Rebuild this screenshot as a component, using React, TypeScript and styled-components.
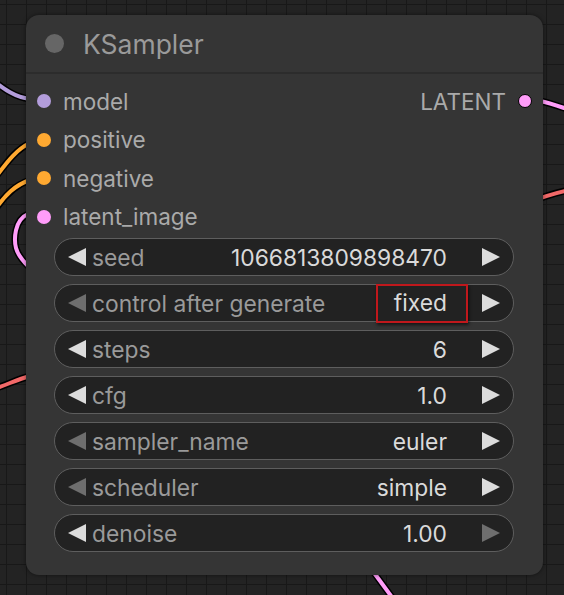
import React from 'react'
import styled, { createGlobalStyle } from 'styled-components'

const GlobalStyle = createGlobalStyle`
  html, body {
    margin: 0;
    padding: 0;
    background: #202020;
  }
  * { box-sizing: border-box; }
`

const Canvas = styled.div`
  position: relative;
  width: 564px;
  height: 595px;
  overflow: hidden;
  background-color: #232323;
  background-image:
    linear-gradient(#181818 1px, transparent 1px),
    linear-gradient(90deg, #181818 1px, transparent 1px);
  background-size: 20px 20px;
  background-position: 6px 4px;
  padding: 15px 21px 0 26px;
  font-family: Inter, 'Noto Sans', sans-serif;
`

const Wires = styled.svg`
  position: absolute;
  inset: 0;
  pointer-events: none;
`

const Node = styled.div`
  position: relative;
  width: 517px;
  height: 560px;
  background: #353535;
  border-radius: 13px;
  box-shadow: 0 0 4px rgba(0, 0, 0, 0.5);
  display: flex;
  flex-direction: column;
`

const Title = styled.div`
  height: 59px;
  display: flex;
  align-items: center;
  gap: 19px;
  padding-left: 19px;
  border-bottom: 2px solid #2c2c2c;
  font-size: 26.5px;
  color: #9a9a9a;
`

const TitleDot = styled.span`
  width: 19px;
  height: 19px;
  border-radius: 50%;
  background: #666;
`

const Slots = styled.div`
  display: flex;
  justify-content: space-between;
  padding: 8px 11px 0 11px;
`

const SlotColumn = styled.div<{ $right?: boolean }>`
  display: flex;
  flex-direction: column;
  align-items: ${(p) => (p.$right ? 'flex-end' : 'flex-start')};
`

const Slot = styled.div<{ $right?: boolean }>`
  height: 38.5px;
  display: flex;
  align-items: center;
  gap: 12px;
  flex-direction: ${(p) => (p.$right ? 'row-reverse' : 'row')};
  font-size: 22.5px;
  color: #aaa;
`

const SlotDot = styled.span<{ $color: string; $outlined?: boolean }>`
  width: 14px;
  height: 14px;
  border-radius: 50%;
  background: ${(p) => p.$color};
  border: ${(p) => (p.$outlined ? '1.5px solid #000' : 'none')};
`

const Widgets = styled.div`
  display: flex;
  flex-direction: column;
  gap: 8px;
  padding: 2px 29px 0 28px;
`

const Widget = styled.div`
  height: 38px;
  display: flex;
  align-items: center;
  padding: 0 13px;
  background: #222;
  border: 1.5px solid #5e5e5e;
  border-radius: 19px;
  font-size: 22.8px;
`

const Arrow = styled.span<{ $dir: 'left' | 'right'; $dim?: boolean }>`
  width: 0;
  height: 0;
  border-top: 9px solid transparent;
  border-bottom: 9px solid transparent;
  ${(p) =>
    p.$dir === 'left'
      ? `border-right: 18px solid ${p.$dim ? '#6e6e6e' : '#dcdcdc'};`
      : `border-left: 18px solid ${p.$dim ? '#6e6e6e' : '#dcdcdc'};`}
`

const Label = styled.span`
  flex: 1;
  margin-left: 6px;
  color: #9a9a9a;
`

const Value = styled.span<{ $boxed?: boolean }>`
  margin-right: 35px;
  color: #dadada;
  ${(p) =>
    p.$boxed &&
    `
    margin-right: 14px;
    padding: 3px 19px 5px 16px;
    border: 2px solid #c0181c;
    box-shadow: 1px 2px 3px rgba(0,0,0,0.6);
  `}
`

const inputs = [
  { name: 'model', color: '#b39ddb' },
  { name: 'positive', color: '#ffa931' },
  { name: 'negative', color: '#ffa931' },
  { name: 'latent_image', color: '#ff9cf9' },
]

const widgets = [
  { label: 'seed', value: '1066813809898470', left: false, right: false },
  { label: 'control after generate', value: 'fixed', left: true, right: false, boxed: true },
  { label: 'steps', value: '6', left: false, right: false },
  { label: 'cfg', value: '1.0', left: false, right: false },
  { label: 'sampler_name', value: 'euler', left: true, right: false },
  { label: 'scheduler', value: 'simple', left: true, right: false },
  { label: 'denoise', value: '1.00', left: false, right: true },
]

const Wire = ({ d, color }: { d: string; color: string }) => (
  <g fill="none" strokeLinecap="round">
    <path d={d} stroke="#000" strokeWidth={7} />
    <path d={d} stroke={color} strokeWidth={4} />
  </g>
)

export default function App() {
  return (
    <>
      <GlobalStyle />
      <Canvas>
        <Wires width="564" height="595">
          <Wire d="M -10 78 C 5 90, 15 97, 30 99" color="#b39ddb" />
          <Wire d="M -5 178 C 5 165, 15 150, 30 143" color="#ffa931" />
          <Wire d="M -5 210 C 5 195, 15 185, 30 180" color="#ffa931" />
          <Wire d="M 28 214 C 14 220, 14 240, 16 248 C 18 256, 24 262, 28 266" color="#ff9cf9" />
          <Wire d="M -10 390 C 5 386, 15 380, 30 376" color="#f26868" />
          <Wire d="M 540 101 C 550 103, 558 106, 570 110" color="#ff9cf9" />
          <Wire d="M 540 198 C 550 195, 558 192, 570 190" color="#f26868" />
          <Wire d="M 372 570 L 394 600" color="#ff9cf9" />
        </Wires>
        <Node>
          <Title>
            <TitleDot />
            KSampler
          </Title>
          <Slots>
            <SlotColumn>
              {inputs.map((i) => (
                <Slot key={i.name}>
                  <SlotDot $color={i.color} />
                  {i.name}
                </Slot>
              ))}
            </SlotColumn>
            <SlotColumn $right>
              <Slot $right>
                <SlotDot $color="#ff9cf9" $outlined />
                LATENT
              </Slot>
            </SlotColumn>
          </Slots>
          <Widgets>
            {widgets.map((w) => (
              <Widget key={w.label}>
                <Arrow $dir="left" $dim={w.left} />
                <Label>{w.label}</Label>
                <Value $boxed={w.boxed}>{w.value}</Value>
                <Arrow $dir="right" $dim={w.right} />
              </Widget>
            ))}
          </Widgets>
        </Node>
      </Canvas>
    </>
  )
}
